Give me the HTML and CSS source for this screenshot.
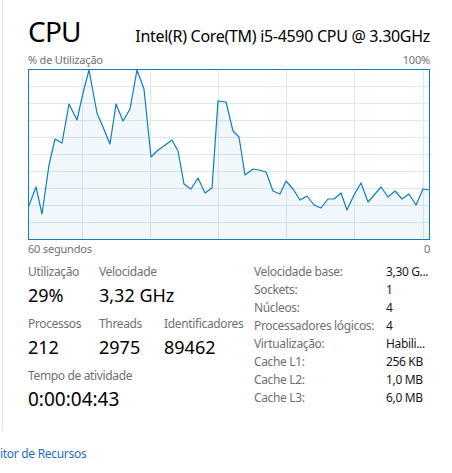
FILE: index.html
```html
<!DOCTYPE html>
<html lang="pt">
<head>
    <meta charset="UTF-8">
    <meta name="viewport" content="width=device-width, initial-scale=1.0">
    <title>CPU</title>
    <link rel="stylesheet" href="styles.css">
</head>
<body>
    <div class="panel">
        <div class="header">
            <h1 class="title">CPU</h1>
            <div class="model">Intel(R) Core(TM) i5-4590 CPU @ 3.30GHz</div>
        </div>

        <div class="axis-row top">
            <span>% de Utilização</span>
            <span>100%</span>
        </div>
        <div class="chart">
            <svg width="400" height="169" viewBox="0 0 400 169">
                <!-- grid -->
                <g stroke="#d9eaf4" stroke-width="1">
                    <line x1="0" y1="16.5" x2="400" y2="16.5"/>
                    <line x1="0" y1="33.5" x2="400" y2="33.5"/>
                    <line x1="0" y1="50.5" x2="400" y2="50.5"/>
                    <line x1="0" y1="67.5" x2="400" y2="67.5"/>
                    <line x1="0" y1="84.5" x2="400" y2="84.5"/>
                    <line x1="0" y1="101.5" x2="400" y2="101.5"/>
                    <line x1="0" y1="118.5" x2="400" y2="118.5"/>
                    <line x1="0" y1="135.5" x2="400" y2="135.5"/>
                    <line x1="0" y1="152.5" x2="400" y2="152.5"/>
                    <line x1="53.5" y1="0" x2="53.5" y2="169"/>
                    <line x1="121.5" y1="0" x2="121.5" y2="169"/>
                    <line x1="189.5" y1="0" x2="189.5" y2="169"/>
                    <line x1="257.5" y1="0" x2="257.5" y2="169"/>
                    <line x1="325.5" y1="0" x2="325.5" y2="169"/>
                    <line x1="394.5" y1="0" x2="394.5" y2="169"/>
                </g>
                <!-- usage -->
                <polygon fill="#117dbb" fill-opacity="0.06" points="0,169 -1,138 7,117 13,144 20,95 26,69 33,73 40,34 48,50 54,23 60,0 68,43 74,57 81,74 87,34 94,51 101,39 108,0 115,19 122,87 128,81 143,70 149,81 155,114 162,119 169,108 176,123 183,118 189,31 197,32 204,61 210,67 216,105 224,99 230,100 237,102 244,121 251,124 257,111 264,119 271,130 278,126 285,135 292,138 299,129 305,129 312,123 318,140 325,125 332,113 339,132 346,124 352,117 359,127 366,121 373,129 380,124 387,135 394,119 400,120 400,169"/>
                <polyline fill="none" stroke="#117dbb" stroke-width="1.2" stroke-linejoin="round" points="-1,138 7,117 13,144 20,95 26,69 33,73 40,34 48,50 54,23 60,0 68,43 74,57 81,74 87,34 94,51 101,39 108,0 115,19 122,87 128,81 143,70 149,81 155,114 162,119 169,108 176,123 183,118 189,31 197,32 204,61 210,67 216,105 224,99 230,100 237,102 244,121 251,124 257,111 264,119 271,130 278,126 285,135 292,138 299,129 305,129 312,123 318,140 325,125 332,113 339,132 346,124 352,117 359,127 366,121 373,129 380,124 387,135 394,119 400,120"/>
            </svg>
        </div>
        <div class="axis-row bottom">
            <span>60 segundos</span>
            <span>0</span>
        </div>

        <div class="details">
            <div class="live">
                <div class="stat-row">
                    <div class="stat w-util">
                        <div class="stat-label">Utilização</div>
                        <div class="stat-value">29%</div>
                    </div>
                    <div class="stat">
                        <div class="stat-label">Velocidade</div>
                        <div class="stat-value">3,32 GHz</div>
                    </div>
                </div>
                <div class="stat-row">
                    <div class="stat w-util">
                        <div class="stat-label">Processos</div>
                        <div class="stat-value">212</div>
                    </div>
                    <div class="stat w-threads">
                        <div class="stat-label">Threads</div>
                        <div class="stat-value">2975</div>
                    </div>
                    <div class="stat">
                        <div class="stat-label">Identificadores</div>
                        <div class="stat-value">89462</div>
                    </div>
                </div>
                <div class="stat-row">
                    <div class="stat">
                        <div class="stat-label">Tempo de atividade</div>
                        <div class="stat-value big">0:00:04:43</div>
                    </div>
                </div>
            </div>

            <div class="specs">
                <span class="spec-name">Velocidade base:</span><span class="spec-val">3,30 G...</span>
                <span class="spec-name">Sockets:</span><span class="spec-val">1</span>
                <span class="spec-name">Núcleos:</span><span class="spec-val">4</span>
                <span class="spec-name">Processadores lógicos:</span><span class="spec-val">4</span>
                <span class="spec-name">Virtualização:</span><span class="spec-val">Habili...</span>
                <span class="spec-name">Cache L1:</span><span class="spec-val">256 KB</span>
                <span class="spec-name">Cache L2:</span><span class="spec-val">1,0 MB</span>
                <span class="spec-name">Cache L3:</span><span class="spec-val">6,0 MB</span>
            </div>
        </div>
    </div>

    <div class="footer">
        <a class="monitor-link" href="#">itor de Recursos</a>
    </div>
</body>
</html>
```

FILE: styles.css
```css
body {
    margin: 0;
    font-family: "Noto Sans", "Open Sans", sans-serif;
    color: #000;
    background: #fff;
    width: 452px;
    height: 473px;
    overflow: hidden;
}
.panel {
    margin-left: 2px;
    border-left: 1px solid #e3e3e3;
    height: 430px;
    padding-left: 25px;
    box-sizing: border-box;
}
.header {
    display: flex;
    justify-content: space-between;
    align-items: baseline;
    width: 402px;
    height: 50px;
    padding-top: 16px;
    box-sizing: border-box;
}
.title {
    margin: 0;
    font-size: 28px;
    font-weight: normal;
    line-height: 30px;
    letter-spacing: -0.8px;
}
.model {
    font-size: 16px;
    line-height: 30px;
    letter-spacing: -0.3px;
}
.axis-row {
    display: flex;
    justify-content: space-between;
    width: 402px;
    font-size: 11px;
    color: #707070;
    letter-spacing: -0.2px;
}
.axis-row.top {
    line-height: 19px;
}
.axis-row.bottom {
    line-height: 18px;
}
.chart {
    width: 402px;
    height: 171px;
    border: 1px solid #117dbb;
    box-sizing: border-box;
    background: #fff;
}
.chart svg {
    display: block;
}
.details {
    display: flex;
    margin-top: 6px;
}
.live {
    width: 226px;
    display: flex;
    flex-direction: column;
    gap: 6px;
}
.stat-row {
    display: flex;
}
.stat.w-util {
    width: 71px;
}
.stat.w-threads {
    width: 65px;
}
.stat-label {
    font-size: 12px;
    line-height: 16px;
    color: #707070;
    letter-spacing: -0.35px;
}
.stat-value {
    font-size: 18px;
    line-height: 30px;
}
.stat-value.big {
    font-size: 19px;
}
.specs {
    display: grid;
    grid-template-columns: 132px auto;
    grid-auto-rows: 18px;
    font-size: 12px;
    line-height: 18px;
    margin-top: -1px;
    letter-spacing: -0.35px;
}
.spec-name {
    color: #707070;
}
.spec-val {
    color: #1a1a1a;
}
.footer {
    padding-top: 11px;
}
.monitor-link {
    font-size: 12px;
    color: #1a6fc9;
    text-decoration: none;
    letter-spacing: -0.3px;
}
```
